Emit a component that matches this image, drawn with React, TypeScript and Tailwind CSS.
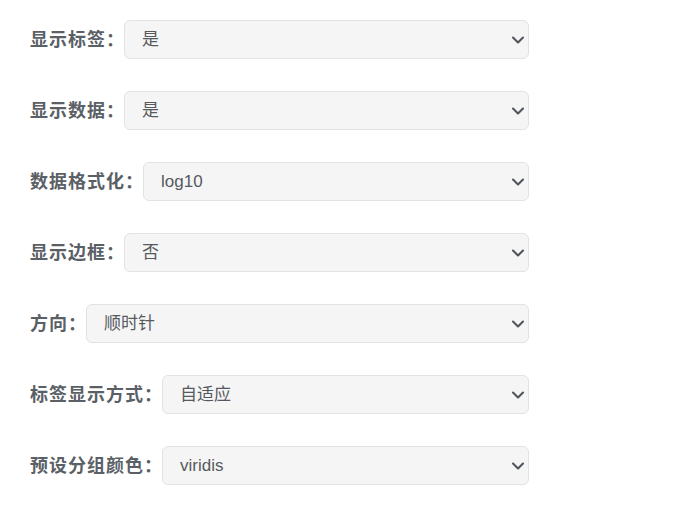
import { ChevronDown } from "lucide-react";

const ROWS = [
  { label: "显示标签", value: "是" },
  { label: "显示数据", value: "是" },
  { label: "数据格式化", value: "log10" },
  { label: "显示边框", value: "否" },
  { label: "方向", value: "顺时针" },
  { label: "标签显示方式", value: "自适应" },
  { label: "预设分组颜色", value: "viridis" },
];

export default function App() {
  return (
    <div
      className="w-[696px] h-[508px] bg-white pt-5 pl-[30px] flex flex-col gap-8"
      style={{ fontFamily: '"Noto Sans", "Noto Sans CJK SC", sans-serif' }}
    >
      {ROWS.map((row) => (
        <div key={row.label} className="flex items-center w-[499px]">
          <label className="shrink-0 flex text-[18px] font-bold text-[#5b5f66]">
            <span className="tracking-[1px]">{row.label}</span>
            <span>：</span>
          </label>
          <div className="flex-1 h-[39px] flex items-center justify-between bg-[#f5f5f5] border border-[#e2e2e2] rounded-md pl-[17px] pr-0">
            <span
              className="text-[17px] text-[#555a60]"
              style={{ fontFamily: '"Liberation Sans", "Noto Sans CJK SC", sans-serif' }}
            >
              {row.value}
            </span>
            <ChevronDown className="w-5 h-5 text-[#4f545a]" strokeWidth={2.5} />
          </div>
        </div>
      ))}
    </div>
  );
}
